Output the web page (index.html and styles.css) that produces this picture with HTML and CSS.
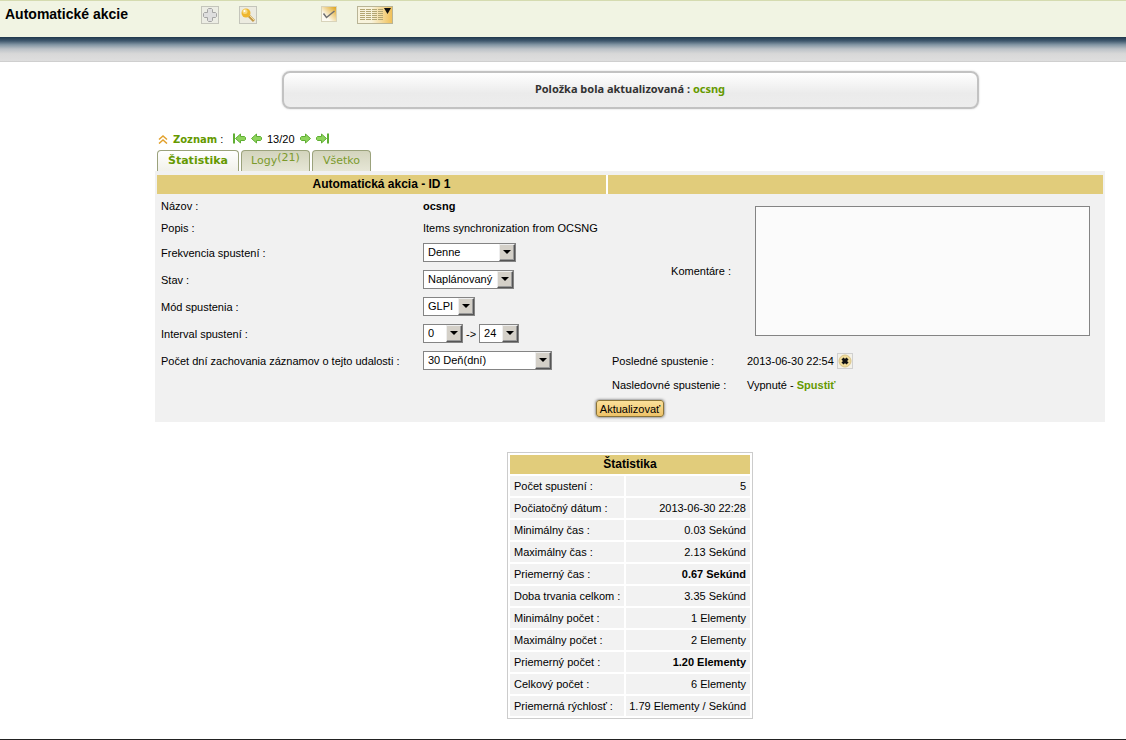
FILE: index.html
```html
<!DOCTYPE html>
<html lang="sk">

<head>
    <meta charset="UTF-8">
    <meta name="viewport" content="width=device-width, initial-scale=1.0">
    <title>Automatické akcie</title>
    <link rel="stylesheet" href="styles.css">
</head>

<body>
    <header class="topbar">
        <h1>Automatické akcie</h1>
        <nav class="tools">
            <a href="#" class="tool add" title="Pridať">
                <svg width="18" height="18" viewBox="0 0 18 18">
                    <rect x="0.5" y="0.5" width="17" height="17" fill="#ecede4" stroke="#c4c5bb" />
                    <path d="M7.500 2.500h3l1 1v3h3l1 1v3l-1 1h-3v3l-1 1h-3l-1-1v-3h-3l-1-1v-3l1-1h3v-3z" fill="#dedede" stroke="#a4a4a4" />
                </svg>
            </a>
            <a href="#" class="tool search" title="Hľadať">
                <svg width="18" height="18" viewBox="0 0 18 18">
                    <rect x="0.5" y="0.5" width="17" height="17" fill="#ecebe0" stroke="#c4c5bb" />
                    <path d="M10 10l5 5" stroke="#c39a48" stroke-width="3" />
                    <path d="M10.500 9.500l5 5" stroke="#f5dc9c" stroke-width="1" />
                    <circle cx="7" cy="7" r="4.500" fill="#eeb62f" />
                    <circle cx="6" cy="5.500" r="2.500" fill="#f8da80" />
                    <circle cx="5.500" cy="5" r="1" fill="#fff" />
                </svg>
            </a>
            <a href="#" class="tool check" title="Označiť">
                <svg width="16" height="16" viewBox="0 0 16 16">
                    <defs>
                        <linearGradient id="gold" x1="0.3" y1="0.7" x2="1" y2="0">
                            <stop offset="0" stop-color="#fdfbf2" />
                            <stop offset="1" stop-color="#dd9f10" />
                        </linearGradient>
                    </defs>
                    <rect x="0.5" y="0.5" width="15" height="15" fill="url(#gold)" stroke="#d8d3bb" />
                    <path d="M2.500 7.500l3 4L13.500 5" fill="none" stroke="#707070" stroke-width="1.500" />
                </svg>
            </a>
            <a href="#" class="tool views" title="Zobrazenie">
                <svg width="36" height="18" viewBox="0 0 36 18">
                    <defs>
                        <linearGradient id="goldWide" x1="0.4" y1="0" x2="1" y2="0">
                            <stop offset="0" stop-color="#f8f3dc" />
                            <stop offset="1" stop-color="#f0bf55" />
                        </linearGradient>
                    </defs>
                    <rect x="0.5" y="0.5" width="35" height="17" fill="url(#goldWide)" stroke="#b9b496" />
                    <path d="M3 3.500h23M3 5.500h23M3 7.500h23M3 9.500h23M3 11.500h23M3 13.500h23" stroke="#b3a673" stroke-dasharray="5 1" />
                    <path d="M27 2h7l-3.500 6z" fill="#111" />
                </svg>
            </a>
        </nav>
    </header>
    <div class="shade"></div>

    <main>
        <div class="message">Položka bola aktualizovaná : <a href="#">ocsng</a></div>

        <div class="card">
            <div class="pager">
                <svg width="10" height="9" viewBox="0 0 10 9">
                    <path d="M1 4.500l4-3.500 4 3.500M1 8.500l4-3.500 4 3.500" fill="none" stroke="#e2a12c" stroke-width="1.500" />
                </svg>
                <span class="list"><a href="#">Zoznam</a> :</span>
                <a href="#" class="arrow" title="Prvý">
                    <svg width="13" height="12" viewBox="0 0 13 12">
                        <path d="M1 .5v10" stroke="#5fae33" stroke-width="2" />
                        <path d="M2.500 5.500L7.500 1v2.500h4l1 1v2l-1 1h-4V10z" fill="#8ed45c" stroke="#5fae33" />
                    </svg>
                </a>
                <a href="#" class="arrow" title="Predchádzajúci">
                    <svg width="11" height="12" viewBox="0 0 11 12">
                        <path d="M.5 5.500L5.500 1v2.500h4l1 1v2l-1 1h-4V10z" fill="#8ed45c" stroke="#5fae33" />
                    </svg>
                </a>
                <span class="count">13/20</span>
                <a href="#" class="arrow" title="Ďalší">
                    <svg width="11" height="12" viewBox="0 0 11 12">
                        <path d="M10.500 5.500L5.500 1v2.500h-4l-1 1v2l1 1h4V10z" fill="#8ed45c" stroke="#5fae33" />
                    </svg>
                </a>
                <a href="#" class="arrow" title="Posledný">
                    <svg width="13" height="12" viewBox="0 0 13 12">
                        <path d="M12 .5v10" stroke="#5fae33" stroke-width="2" />
                        <path d="M10.500 5.500L5.500 1v2.500h-4l-1 1v2l1 1h4V10z" fill="#8ed45c" stroke="#5fae33" />
                    </svg>
                </a>
            </div>

            <nav class="tabs">
                <a href="#" class="tab active">Štatistika</a>
                <a href="#" class="tab logs">Logy<sup>(21)</sup></a>
                <a href="#" class="tab all">Všetko</a>
            </nav>

            <form class="panel">
                <div class="titles">
                    <h2>Automatická akcia - ID 1</h2>
                    <h2></h2>
                </div>
                <div class="columns">
                    <div class="left">
                        <div class="row"><span>Názov :</span><b>ocsng</b></div>
                        <div class="row"><span>Popis :</span><span>Items synchronization from OCSNG</span></div>
                        <div class="row tall">
                            <label for="frequency">Frekvencia spustení :</label>
                            <span class="select w-frequency"><select id="frequency"><option>Denne</option></select></span>
                        </div>
                        <div class="row tall">
                            <label for="state">Stav :</label>
                            <span class="select w-state"><select id="state"><option>Naplánovaný</option></select></span>
                        </div>
                        <div class="row tall">
                            <label for="mode">Mód spustenia :</label>
                            <span class="select w-mode"><select id="mode"><option>GLPI</option></select></span>
                        </div>
                        <div class="row tall">
                            <label for="hourmin">Interval spustení :</label>
                            <div class="interval">
                                <span class="select w-hour"><select id="hourmin"><option>0</option></select></span>
                                <label for="hourmax">-&gt;</label>
                                <span class="select w-hour"><select id="hourmax"><option>24</option></select></span>
                            </div>
                        </div>
                        <div class="row tall">
                            <label for="logs">Počet dní zachovania záznamov o tejto udalosti :</label>
                            <span class="select w-logs"><select id="logs"><option>30 Deň(dní)</option></select></span>
                        </div>
                    </div>
                    <div class="right">
                        <div class="comment">
                            <label for="comment">Komentáre :</label>
                            <textarea id="comment"></textarea>
                        </div>
                        <div class="row tall">
                            <span>Posledné spustenie :</span>
                            <span class="last">2013-06-30 22:54
                                <button type="button" class="reset" title="Vynulovať">
                                    <svg width="16" height="16" viewBox="0 0 16 16">
                                        <rect x="0.5" y="0.5" width="15" height="15" fill="#f3f1e8" stroke="#d0d0d0" />
                                        <circle cx="8" cy="8" r="6" fill="#f1dc9a" stroke="#d9c48a" />
                                        <path d="M5.500 5.500l5 5M10.500 5.500l-5 5" stroke="#111" stroke-width="3" />
                                    </svg>
                                </button>
                            </span>
                        </div>
                        <div class="row">
                            <span>Nasledovné spustenie :</span>
                            <span>Vypnuté - <a href="#">Spustiť</a></span>
                        </div>
                    </div>
                </div>
                <div class="actions"><button type="submit" class="submit">Aktualizovať</button></div>
            </form>
        </div>

        <table class="stats">
            <thead>
                <tr><th colspan="2">Štatistika</th></tr>
            </thead>
            <tbody>
                <tr><td>Počet spustení :</td><td>5</td></tr>
                <tr><td>Počiatočný dátum :</td><td>2013-06-30 22:28</td></tr>
                <tr><td>Minimálny čas :</td><td>0.03 Sekúnd</td></tr>
                <tr><td>Maximálny čas :</td><td>2.13 Sekúnd</td></tr>
                <tr><td>Priemerný čas :</td><td><b>0.67 Sekúnd</b></td></tr>
                <tr><td>Doba trvania celkom :</td><td>3.35 Sekúnd</td></tr>
                <tr><td>Minimálny počet :</td><td>1 Elementy</td></tr>
                <tr><td>Maximálny počet :</td><td>2 Elementy</td></tr>
                <tr><td>Priemerný počet :</td><td><b>1.20 Elementy</b></td></tr>
                <tr><td>Celkový počet :</td><td>6 Elementy</td></tr>
                <tr><td>Priemerná rýchlosť :</td><td>1.79 Elementy / Sekúnd</td></tr>
            </tbody>
        </table>
    </main>
    <footer></footer>
</body>

</html>
```
FILE: styles.css
```css
*,
*::before {
    box-sizing: border-box;
}

body {
    margin: 0;
    background: #fff;
    color: #000;
    font-family: "Liberation Sans", Arial, sans-serif;
    font-size: 11px;
    line-height: 14px;
}

a {
    color: #659900;
    font-weight: bold;
    text-decoration: none;
}

svg {
    display: block;
}

h1,
h2 {
    margin: 0;
}

/* top bar */
.topbar {
    display: flex;
    align-items: flex-start;
    height: 37px;
    padding: 5px;
    background: #f1f4e3;
    border-top: 1px solid #d5dbb0;
}

h1 {
    width: 196px;
    font-size: 14px;
    line-height: 16px;
}

.tools {
    display: flex;
}

.tool.search {
    margin-left: 20px;
}

.tool.check {
    margin-left: 64px;
}

.tool.views {
    margin-left: 20px;
}

.shade {
    height: 25px;
    background: linear-gradient(#1f374c, #3f586d 16%, #8295a3 32%, #bcc2c7 50%, #d8d8d8 70%, #dedede);
    border-bottom: 1px solid #cfcfcf;
}

/* content */
main {
    display: flex;
    flex-direction: column;
    align-items: center;
    padding: 9px 21px 20px 155px;
}

.message {
    width: 100%;
    max-width: 697px;
    padding: 9px 10px 11px;
    border: 2px solid #c2c2c2;
    border-radius: 8px;
    background: linear-gradient(#fff, #ebebeb 60%, #ededed);
    box-shadow: 0 0 2px #ccc;
    color: #333;
    font-family: "Noto Sans", Tahoma, sans-serif;
    font-weight: bold;
    text-align: center;
}

.card {
    width: 100%;
    max-width: 950px;
    margin-top: 24px;
}

.pager {
    display: flex;
    align-items: center;
    gap: 5px;
    height: 12px;
    padding-left: 3px;
}

.list {
    width: 55px;
}

.list a {
    font-family: "DejaVu Sans", Verdana, sans-serif;
    font-size: 10px;
}

.tabs {
    display: flex;
    gap: 2px;
    padding: 5px 2px 0;
}

.tab {
    height: 21px;
    padding-top: 3px;
    border: 1px solid #9ba27c;
    border-bottom: 0;
    border-radius: 4px 4px 0 0;
    background: linear-gradient(#d3d4bd, #e6e6d6);
    color: #7b9a2c;
    font-family: "DejaVu Sans", Verdana, sans-serif;
    font-weight: normal;
    text-align: center;
    white-space: nowrap;
}

.tab.active {
    width: 82px;
    background: linear-gradient(#fff, #f1f1ea);
    color: #659900;
    font-weight: bold;
}

.tab.logs {
    width: 69px;
}

.tab.all {
    width: 59px;
}

.tab sup {
    font-size: 11px;
    line-height: 0;
    vertical-align: 3px;
}

/* form */
.panel {
    padding: 4px 2px 3px;
    background: #f1f1f1;
}

.titles,
.columns {
    display: grid;
    grid-template-columns: 449fr 495fr;
    column-gap: 2px;
}

.titles {
    background: #fff;
}

h2,
.stats th {
    height: 19px;
    background: #e1cc7b;
    font-size: 12px;
    line-height: 19px;
    text-align: center;
}

.columns {
    padding-top: 1px;
}

.row {
    display: grid;
    grid-template-columns: 262px 1fr;
    align-items: center;
    height: 22px;
    padding-left: 4px;
}

.row.tall {
    height: 27px;
}

.right .row {
    grid-template-columns: 135px 1fr;
}

.interval {
    display: flex;
    align-items: center;
    gap: 3px;
}

.select {
    position: relative;
    display: inline-block;
    height: 19px;
}

.select select {
    display: block;
    width: 100%;
    height: 19px;
    padding: 0 0 1px 4px;
    appearance: none;
    border: 1px solid #848484;
    border-radius: 0;
    background: #fff;
    color: #000;
    font-family: inherit;
    font-size: 11px;
}

.select::before {
    content: "";
    position: absolute;
    top: 1px;
    right: 1px;
    width: 16px;
    height: 17px;
    border: 1px solid;
    border-color: #eee #555 #555 #eee;
    background: #d4d0c8;
    box-shadow: inset -1px -1px #999;
    pointer-events: none;
}

.select::after {
    content: "";
    position: absolute;
    top: 7px;
    right: 5px;
    border: 4px solid transparent;
    border-top-color: #000;
    border-bottom: 0;
    pointer-events: none;
}

.w-frequency {
    width: 93px;
}

.w-state {
    width: 91px;
}

.w-mode {
    width: 52px;
}

.w-hour {
    width: 40px;
}

.w-logs {
    width: 129px;
}

.comment {
    display: flex;
    justify-content: flex-end;
    align-items: center;
    gap: 24px;
    height: 152px;
    padding-right: 13px;
}

textarea {
    width: 335px;
    height: 130px;
    border: 1px solid #848484;
    background: #fbfbfb;
    resize: none;
}

.last {
    display: flex;
    align-items: center;
    gap: 3px;
}

.reset {
    padding: 0;
    border: 0;
    background: none;
}

.actions {
    display: flex;
    justify-content: center;
    padding: 4px 0 2px;
}

.submit {
    height: 17px;
    padding: 0 3px;
    border: 1px solid #8b7438;
    border-radius: 3px;
    background: linear-gradient(#fbe09a, #edc268);
    box-shadow: 0 0 3px #444;
    font-family: inherit;
    font-size: 11px;
    line-height: 14px;
}

/* statistics */
.stats {
    width: 246px;
    margin-top: 30px;
    border: 1px solid #ccc;
    border-spacing: 2px;
}

.stats th {
    padding: 0;
}

.stats td {
    height: 20px;
    padding: 0 2px 0 4px;
    background: #f2f2f2;
    white-space: nowrap;
}

.stats td:last-child {
    padding: 0 4px 0 2px;
    text-align: right;
}

footer {
    height: 1px;
    background: #222;
}
```
